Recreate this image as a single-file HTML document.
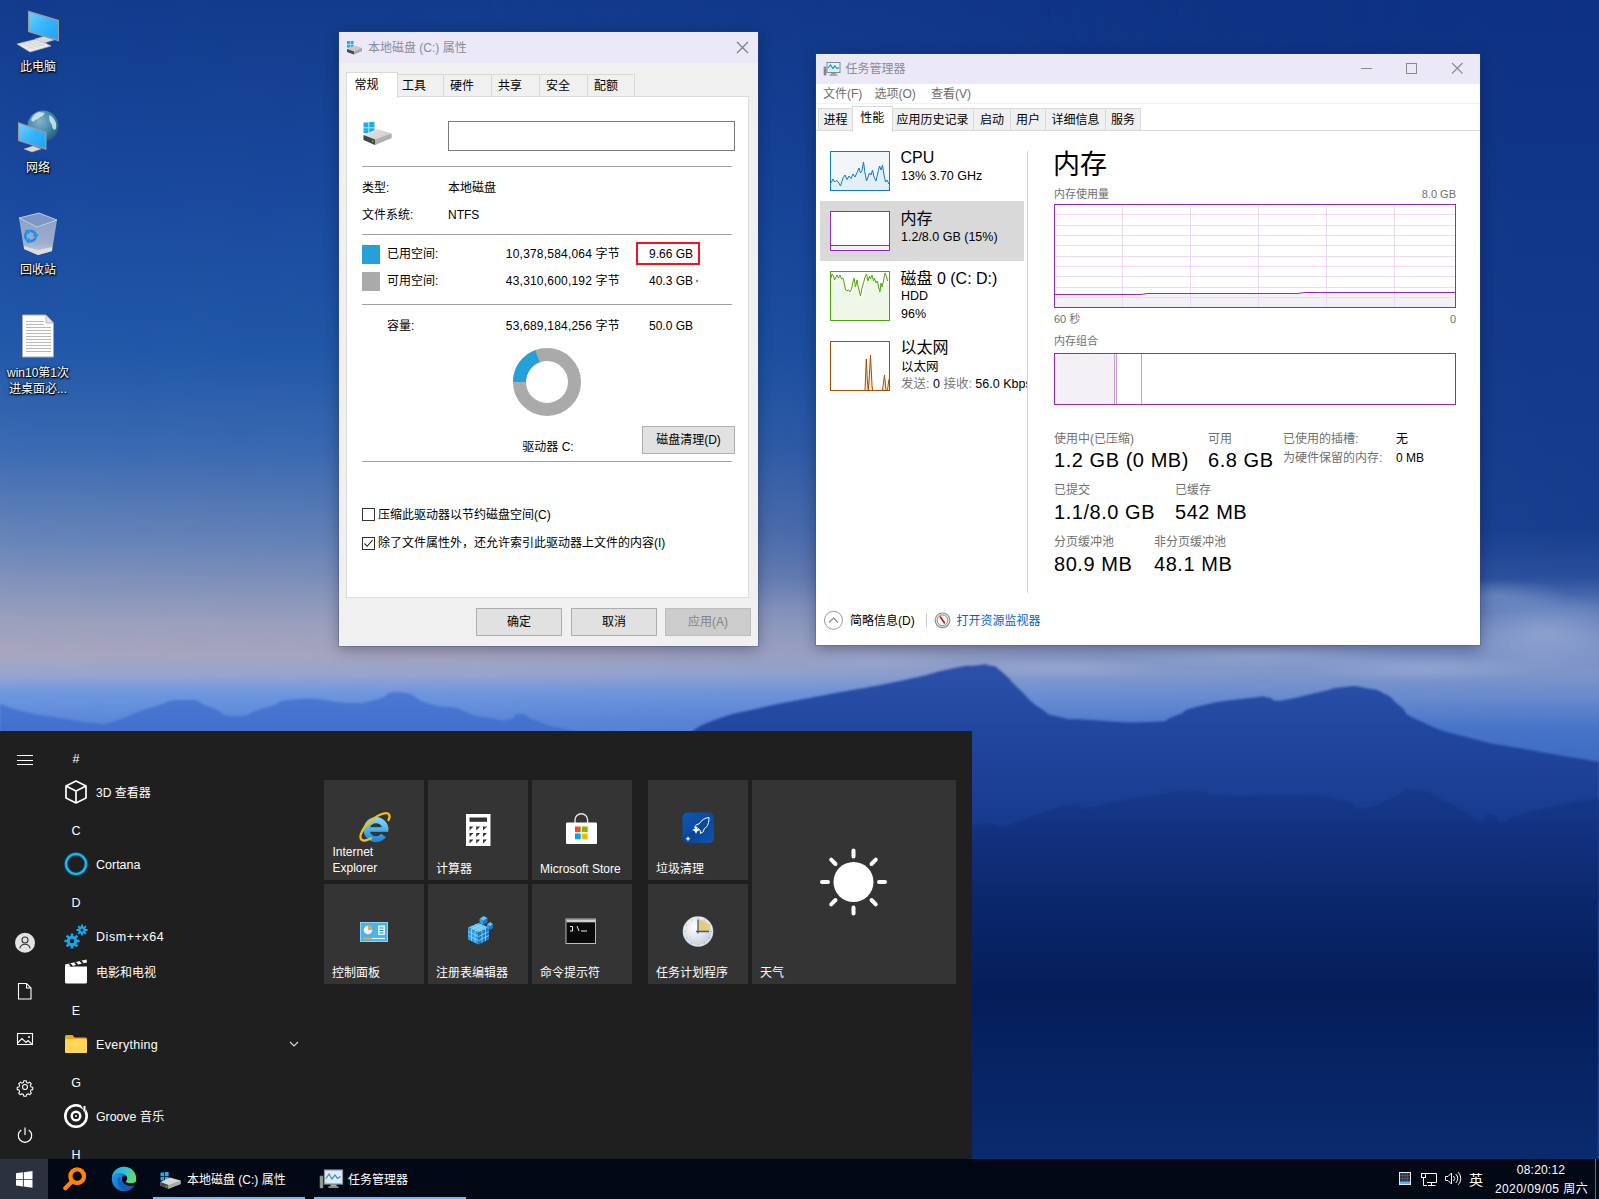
<!DOCTYPE html>
<html lang="zh-CN">
<head>
<meta charset="utf-8">
<title>Windows 10 桌面</title>
<style>
*{box-sizing:border-box;margin:0;padding:0}
html,body{width:1599px;height:1199px;overflow:hidden;background:#0c2f7c}
body{position:relative;font-family:"Liberation Sans","Noto Sans CJK SC",sans-serif;font-size:12px;color:#000;line-height:1}
.abs{position:absolute}
.t{position:absolute;white-space:nowrap;line-height:16px;height:16px}
#wall{position:absolute;left:0;top:0;width:1599px;height:1199px}
/* desktop icons */
.dlabel{position:absolute;width:90px;text-align:center;color:#fff;font-size:12px;line-height:17px;text-shadow:0 1px 2px #000,0 0 3px rgba(0,0,0,.9),1px 1px 1px rgba(0,0,0,.8)}
/* windows */
.win{position:absolute;background:#f0f0f0;box-shadow:0 0 0 1px rgba(60,70,110,.55),0 6px 22px rgba(0,0,20,.5)}
.tbar{position:absolute;left:0;top:0;right:0;background:#ebe9f8}
.hr{position:absolute;height:1px;background:#a0a0a0}
.btn{position:absolute;background:#e1e1e1;border:1px solid #adadad;text-align:center;font-size:12px}
/* start */
#start{position:absolute;left:0;top:731px;width:972px;height:428px;background:#1f1f1f;color:#fff}
.tile{position:absolute;background:#333;width:100px;height:100px}
.tile .lb{position:absolute;left:8px;bottom:5px;font-size:12px;line-height:16px;color:#fff;white-space:nowrap}
.al{position:absolute;left:96px;font-size:13px;line-height:18px;color:#fff;white-space:nowrap}
.ah{position:absolute;left:70px;font-size:13px;line-height:18px;color:#fff;width:12px;text-align:center}
#taskbar{position:absolute;left:0;top:1159px;width:1599px;height:40px;background:#040a1a;color:#fff}
</style>
</head>
<body>
<svg id="wall" width="1599" height="1199" viewBox="0 0 1599 1199">
<defs>
<linearGradient id="skyL" x1="0" y1="0" x2="0" y2="760" gradientUnits="userSpaceOnUse">
<stop offset="0" stop-color="#133c8d"/>
<stop offset="0.26" stop-color="#1a4a9f"/>
<stop offset="0.46" stop-color="#2259a9"/>
<stop offset="0.59" stop-color="#3b6bb3"/>
<stop offset="0.72" stop-color="#6c87ba"/>
<stop offset="0.815" stop-color="#9aa0bd"/>
<stop offset="0.862" stop-color="#a9a6bf"/>
<stop offset="0.888" stop-color="#97a6d0"/>
<stop offset="0.912" stop-color="#6f97e0"/>
<stop offset="0.95" stop-color="#5b88da"/>
<stop offset="1" stop-color="#5583d6"/>
</linearGradient>
<linearGradient id="skyR" x1="0" y1="0" x2="0" y2="760" gradientUnits="userSpaceOnUse">
<stop offset="0" stop-color="#0e3283"/>
<stop offset="0.26" stop-color="#103687"/>
<stop offset="0.53" stop-color="#133a8b"/>
<stop offset="0.70" stop-color="#173e8e"/>
<stop offset="0.76" stop-color="#2a4f9c"/>
<stop offset="0.80" stop-color="#5a78b8"/>
<stop offset="0.84" stop-color="#768ec3"/>
<stop offset="0.885" stop-color="#7f95c9"/>
<stop offset="0.92" stop-color="#6688cd"/>
<stop offset="0.96" stop-color="#4673c8"/>
<stop offset="1" stop-color="#3f6cc4"/>
</linearGradient>
<linearGradient id="hm" x1="0" y1="0" x2="1599" y2="0" gradientUnits="userSpaceOnUse">
<stop offset="0" stop-color="#000"/>
<stop offset="0.3" stop-color="#141414"/>
<stop offset="0.5" stop-color="#5a5a5a"/>
<stop offset="0.65" stop-color="#b3b3b3"/>
<stop offset="0.8" stop-color="#ebebeb"/>
<stop offset="1" stop-color="#fff"/>
</linearGradient>
<mask id="mk" maskUnits="userSpaceOnUse" x="0" y="0" width="1599" height="1199"><rect width="1599" height="1199" fill="url(#hm)"/></mask>
<linearGradient id="m1" x1="0" y1="690" x2="0" y2="740" gradientUnits="userSpaceOnUse">
<stop offset="0" stop-color="#4b79d3"/><stop offset="1" stop-color="#416ecc"/>
</linearGradient>
<linearGradient id="m2" x1="0" y1="660" x2="0" y2="830" gradientUnits="userSpaceOnUse">
<stop offset="0" stop-color="#2c52ab"/><stop offset="0.4" stop-color="#22479f"/><stop offset="1" stop-color="#173a8e"/>
</linearGradient>
<linearGradient id="m3" x1="0" y1="790" x2="0" y2="1160" gradientUnits="userSpaceOnUse">
<stop offset="0" stop-color="#17398a"/><stop offset="0.12" stop-color="#123180"/><stop offset="0.3" stop-color="#0b276c"/><stop offset="0.55" stop-color="#051e5a"/><stop offset="1" stop-color="#0a2b6f"/>
</linearGradient>
<radialGradient id="cl" cx="0.5" cy="0.5" r="0.5"><stop offset="0" stop-color="#a9b9dc" stop-opacity=".8"/><stop offset="1" stop-color="#a9b9dc" stop-opacity="0"/></radialGradient>
<filter id="bl" color-interpolation-filters="sRGB"><feGaussianBlur stdDeviation="1.2"/></filter>
</defs>
<rect width="1599" height="1199" fill="url(#skyL)"/>
<rect width="1599" height="1199" fill="url(#skyR)" mask="url(#mk)"/>
<ellipse cx="1260" cy="656" rx="150" ry="13" fill="url(#cl)" opacity=".55"/>
<ellipse cx="1060" cy="668" rx="110" ry="11" fill="url(#cl)" opacity=".5"/>
<ellipse cx="1420" cy="668" rx="120" ry="14" fill="url(#cl)" opacity=".5"/>
<ellipse cx="1545" cy="632" rx="85" ry="40" fill="url(#cl)" opacity=".6"/>
<ellipse cx="1500" cy="596" rx="70" ry="16" fill="url(#cl)" opacity=".4"/>
<ellipse cx="880" cy="660" rx="90" ry="12" fill="url(#cl)" opacity=".35"/>
<path filter="url(#bl)" fill="url(#m1)" d="M0 704C8.3 706.7 5.0 707.3 25 712C45.0 716.7 36.7 714.3 60 718C83.3 721.7 77.7 721.7 95 723C112.3 724.3 93.7 727.0 112 722C130.3 717.0 125.7 715.3 150 708C174.3 700.7 165.0 700.3 185 700C205.0 699.7 193.3 701.7 210 707C226.7 712.3 216.7 715.7 235 716C253.3 716.3 243.3 713.7 265 708C286.7 702.3 271.7 700.7 300 699C328.3 697.3 325.0 702.7 350 703C375.0 703.3 358.3 703.5 375 700C391.7 696.5 381.7 691.2 400 692.5C418.3 693.8 411.7 698.8 430 704C448.3 709.2 443.3 705.3 455 708C466.7 710.7 457.7 709.3 465 712C472.3 714.7 468.7 714.0 477 716C485.3 718.0 479.7 716.7 490 718C500.3 719.3 498.0 721.3 508 720C518.0 718.7 511.0 714.0 520 714C529.0 714.0 521.7 715.3 535 720C548.3 724.7 538.3 724.0 560 728C581.7 732.0 553.3 729.7 600 732C646.7 734.3 633.3 732.3 700 735C766.7 737.7 766.7 738.3 800 740L800 760L0 760Z"/>
<path filter="url(#bl)" fill="url(#m2)" d="M690 733C698.3 728.7 691.7 728.3 715 720C738.3 711.7 725.0 716.0 760 708C795.0 700.0 773.3 705.0 820 696C866.7 687.0 856.7 690.0 900 681C943.3 672.0 925.0 674.2 950 669C975.0 663.8 961.7 666.7 975 665.5C988.3 664.3 981.0 663.3 990 665.5C999.0 667.7 992.0 663.8 1002 672C1012.0 680.2 1007.3 678.0 1020 690C1032.7 702.0 1026.7 699.0 1040 708C1053.3 717.0 1043.3 713.0 1060 717C1076.7 721.0 1060.0 718.3 1090 720C1120.0 721.7 1121.7 723.3 1150 722C1178.3 720.7 1158.3 721.3 1175 716C1191.7 710.7 1175.0 712.0 1200 706C1225.0 700.0 1227.3 700.8 1250 698C1272.7 695.2 1259.7 696.7 1268 697.5C1276.3 698.3 1267.7 700.0 1275 700.5C1282.3 701.0 1275.0 701.8 1290 699C1305.0 696.2 1301.7 696.0 1320 692C1338.3 688.0 1330.0 688.3 1345 687C1360.0 685.7 1351.7 685.7 1365 688C1378.3 690.3 1373.3 688.0 1385 694C1396.7 700.0 1388.3 697.0 1400 706C1411.7 715.0 1396.7 710.3 1420 721C1443.3 731.7 1433.3 728.3 1470 738C1506.7 747.7 1487.0 742.0 1530 750C1573.0 758.0 1576.0 758.0 1599 762L1599 900L690 900Z"/>
<path filter="url(#bl)" fill="url(#m3)" d="M960 835C965.0 832.0 965.0 829.7 975 826C985.0 822.3 981.7 824.0 990 824C998.3 824.0 991.7 826.3 1000 826C1008.3 825.7 1001.7 827.0 1015 823C1028.3 819.0 1021.0 820.0 1040 814C1059.0 808.0 1057.0 806.8 1072 805C1087.0 803.2 1072.3 809.2 1085 808.5C1097.7 807.8 1088.3 807.2 1110 803C1131.7 798.8 1123.3 800.0 1150 796C1176.7 792.0 1163.3 791.0 1190 791C1216.7 791.0 1195.0 794.7 1230 796C1265.0 797.3 1258.3 793.7 1295 795C1331.7 796.3 1317.7 795.7 1340 800C1362.3 804.3 1345.3 808.3 1362 808C1378.7 807.7 1372.3 805.0 1390 799C1407.7 793.0 1395.0 788.3 1415 790C1435.0 791.7 1429.0 794.0 1450 804C1471.0 814.0 1465.7 816.3 1478 820C1490.3 823.7 1481.3 816.0 1487 815C1492.7 814.0 1489.7 814.7 1495 817C1500.3 819.3 1494.7 822.7 1503 822C1511.3 821.3 1501.0 820.7 1520 815C1539.0 809.3 1533.7 810.7 1560 805C1586.3 799.3 1586.0 800.3 1599 798L1599 1199L960 1199Z"/>
</svg>

<svg class="abs" style="left:0;top:0" width="100" height="400" viewBox="0 0 100 400">
<defs>
<linearGradient id="scr" x1="0" y1="0" x2="1" y2="1"><stop offset="0" stop-color="#6fd0ff"/><stop offset=".5" stop-color="#35b4ff"/><stop offset="1" stop-color="#1ea3f5"/></linearGradient>
<radialGradient id="glb" cx=".4" cy=".35" r=".7"><stop offset="0" stop-color="#7fb6cf"/><stop offset=".6" stop-color="#3f86a6"/><stop offset="1" stop-color="#1f5c7c"/></radialGradient>
<linearGradient id="bin" x1="0" y1="0" x2="0" y2="1"><stop offset="0" stop-color="#8fa6cc"/><stop offset=".7" stop-color="#a9b6cf"/><stop offset="1" stop-color="#d5d7dc"/></linearGradient>
</defs>
<!-- this pc -->
<polygon points="17,44 37,39 51,46 30,52" fill="#ededed" stroke="#bdbdbd" stroke-width=".6"/><path d="M20.500 44.800L40 40M24 46.500L43.500 41.800M27 48.500L47 43.500M22 42.800L35 49.500M27 41.500L40 48.300M32 40.300L45 47" stroke="#c9c9c9" stroke-width=".6" fill="none"/>
<polygon points="35,39 45,36 54,40 44,43" fill="#d8d8d8" stroke="#b5b5b5" stroke-width=".5"/>
<polygon points="28,10.5 59,20 59,41.5 28,32" fill="#9a9a9a"/>
<polygon points="29.2,12.3 57.6,21 57.6,39.6 29.2,31" fill="url(#scr)"/>
<!-- network -->
<circle cx="43" cy="126" r="15.5" fill="url(#glb)"/>
<path d="M31 120q2-6 8-8q4 0 5 2q-1 3-4 3q-2 3-5 3q-1 3-4 0zM49 115q5 2 7 8q1 5-1 7q-3-1-3-5q-3-3-3-10zM40 113q3-1 5 0l-2 2z" fill="#d7e9f1" opacity=".85"/>
<polygon points="24,149 33,146 41,149 32,152" fill="#d8d8d8" stroke="#b5b5b5" stroke-width=".5"/>
<polygon points="18,122 46.5,132 46.5,150 18,141" fill="#9a9a9a"/>
<polygon points="19.2,123.8 45.2,133 45.2,148.2 19.2,140" fill="url(#scr)"/>
<!-- recycle bin -->
<polygon points="19,218 39,213 57,220 52,251 38,255 24,249" fill="url(#bin)" opacity=".92"/>
<polygon points="19,218 39,213 57,220 37,227" fill="#7e97c4" stroke="#cfd8e8" stroke-width=".8"/>
<polygon points="24,246 38,250 52,247 52,251 38,255 24,249" fill="#dedede"/>
<path d="M29.6 230.9A5.2 5.2 0 0 1 35.5 234.7M35.4 237.8A5.2 5.2 0 0 1 29.2 241.0M26.5 239.3A5.2 5.2 0 0 1 26.8 232.3" stroke="#1e8fe6" stroke-width="2.800" fill="none"/><path d="M38.6 233.8L32.4 235.5L36.5 238.1ZM28.3 244.1L30.0 237.9L25.7 240.1ZM24.6 230.1L29.1 234.6L29.4 229.8Z" fill="#1e8fe6"/>
<!-- text file -->
<polygon points="22.5,315 46,315 53.5,323 53.5,357 22.5,357" fill="#fcfcfc" stroke="#a8a8a8" stroke-width="1"/>
<polygon points="46,315 46,323 53.5,323" fill="#e4e4e4" stroke="#a8a8a8" stroke-width=".8"/>
<g stroke="#b9b9b9" stroke-width="1"><path d="M26 321.5h18M26 324.5h18M26 327.5h25M26 330.5h25M26 333.5h25M26 336.5h25M26 339.5h25M26 342.5h25M26 345.5h25M26 348.5h25M26 351.5h25"/></g>
</svg>
<div class="t" style="top:58.75px;font-size:12px;line-height:17px;height:17px;left:-162px;width:400px;text-align:center;color:#fff;text-shadow:0 1px 2px #000,0 0 3px rgba(0,0,0,.9),1px 1px 1px rgba(0,0,0,.8);">此电脑</div>
<div class="t" style="top:159.75px;font-size:12px;line-height:17px;height:17px;left:-162px;width:400px;text-align:center;color:#fff;text-shadow:0 1px 2px #000,0 0 3px rgba(0,0,0,.9),1px 1px 1px rgba(0,0,0,.8);">网络</div>
<div class="t" style="top:261.75px;font-size:12px;line-height:17px;height:17px;left:-162px;width:400px;text-align:center;color:#fff;text-shadow:0 1px 2px #000,0 0 3px rgba(0,0,0,.9),1px 1px 1px rgba(0,0,0,.8);">回收站</div>
<div class="t" style="top:364.75px;font-size:12px;line-height:17px;height:17px;left:-162px;width:400px;text-align:center;color:#fff;text-shadow:0 1px 2px #000,0 0 3px rgba(0,0,0,.9),1px 1px 1px rgba(0,0,0,.8);">win10第1次</div>
<div class="t" style="top:380.75px;font-size:12px;line-height:17px;height:17px;left:-162px;width:400px;text-align:center;color:#fff;text-shadow:0 1px 2px #000,0 0 3px rgba(0,0,0,.9),1px 1px 1px rgba(0,0,0,.8);">进桌面必...</div>

<div class="abs" style="left:339px;top:32px;width:419px;height:614px;background:#f0f0f0;box-shadow:0 0 0 1px rgba(60,75,125,.3),0 3px 14px rgba(0,0,30,.32);"></div>
<div class="abs" style="left:339px;top:32px;width:419px;height:31px;background:#ebe9f8;"></div>
<svg class="abs" style="left:346px;top:40px" width="18" height="16" viewBox="0 0 18 16"><rect x="1" y="1" width="3" height="3" fill="#19b0f0"/><rect x="4.6" y="1" width="3" height="3" fill="#19b0f0"/><rect x="1" y="4.6" width="3" height="3" fill="#19b0f0"/><rect x="4.6" y="4.6" width="3" height="3" fill="#19b0f0"/><polygon points="1,9 9,5.5 16,8 16,11 8,14.5 1,12" fill="#c9c9c9"/><polygon points="1,9 8,11.5 8,14.5 1,12" fill="#4a4a4a"/><polygon points="8,11.5 16,8 16,11 8,14.5" fill="#a9a9a9"/></svg>
<div class="t" style="top:39.75px;font-size:12px;line-height:17px;height:17px;left:368px;color:#8b8b99;">本地磁盘 (C:) 属性</div>
<svg class="abs" style="left:736px;top:41px" width="13" height="13" viewBox="0 0 13 13"><path d="M1 1L12 12M12 1L1 12" stroke="#7a7a7a" stroke-width="1.1" fill="none"/></svg>
<div class="abs" style="left:346px;top:96px;width:403px;height:502px;background:#fff;border:1px solid #dcdcdc;"></div>
<div class="abs" style="left:397px;top:74px;width:47px;height:23px;background:#f0f0f0;border:1px solid #d9d9d9;border-bottom:1px solid #dcdcdc;"></div>
<div class="t" style="top:77.75px;font-size:12px;line-height:17px;height:17px;left:214px;width:400px;text-align:center;">工具</div>
<div class="abs" style="left:443px;top:74px;width:49px;height:23px;background:#f0f0f0;border:1px solid #d9d9d9;border-bottom:1px solid #dcdcdc;"></div>
<div class="t" style="top:77.75px;font-size:12px;line-height:17px;height:17px;left:262px;width:400px;text-align:center;">硬件</div>
<div class="abs" style="left:491px;top:74px;width:49px;height:23px;background:#f0f0f0;border:1px solid #d9d9d9;border-bottom:1px solid #dcdcdc;"></div>
<div class="t" style="top:77.75px;font-size:12px;line-height:17px;height:17px;left:310px;width:400px;text-align:center;">共享</div>
<div class="abs" style="left:539px;top:74px;width:49px;height:23px;background:#f0f0f0;border:1px solid #d9d9d9;border-bottom:1px solid #dcdcdc;"></div>
<div class="t" style="top:77.75px;font-size:12px;line-height:17px;height:17px;left:358px;width:400px;text-align:center;">安全</div>
<div class="abs" style="left:587px;top:74px;width:48px;height:23px;background:#f0f0f0;border:1px solid #d9d9d9;border-bottom:1px solid #dcdcdc;"></div>
<div class="t" style="top:77.75px;font-size:12px;line-height:17px;height:17px;left:406px;width:400px;text-align:center;">配额</div>
<div class="abs" style="left:346px;top:72px;width:52px;height:26px;background:#fff;border:1px solid #d9d9d9;border-bottom:none;"></div>
<div class="t" style="top:76.75px;font-size:12px;line-height:17px;height:17px;left:166.5px;width:400px;text-align:center;">常规</div>
<svg class="abs" style="left:362px;top:121px" width="32" height="26" viewBox="0 0 32 26"><defs><linearGradient id="dtop" x1="0" y1="0" x2="1" y2="1"><stop offset="0" stop-color="#e6e6e6"/><stop offset="1" stop-color="#c4c4c4"/></linearGradient></defs><rect x="1.5" y="1.5" width="5" height="5" fill="#19b0f0"/><rect x="7.2" y="1" width="5.3" height="5.5" fill="#19b0f0"/><rect x="1.5" y="7.2" width="5" height="5" fill="#19b0f0"/><rect x="7.2" y="7.2" width="5.3" height="5.3" fill="#19b0f0"/><polygon points="1.5,14 15,8 29.5,12.5 29.5,17 13,24 1.5,19" fill="url(#dtop)"/><polygon points="1.5,14 13,18.5 13,24 1.5,19" fill="#454545"/><polygon points="13,18.5 29.5,12.5 29.5,17 13,24" fill="#b0b0b0"/><rect x="10" y="19.5" width="1.6" height="1.6" fill="#3bd23b"/></svg>
<div class="abs" style="left:448px;top:121px;width:287px;height:30px;background:#fff;border:1px solid #7a7a7a;"></div>
<div class="abs" style="left:362px;top:166px;width:370px;height:1px;background:#a0a0a0;"></div>
<div class="abs" style="left:362px;top:234px;width:370px;height:1px;background:#a0a0a0;"></div>
<div class="abs" style="left:362px;top:304px;width:370px;height:1px;background:#a0a0a0;"></div>
<div class="abs" style="left:362px;top:461px;width:370px;height:1px;background:#a0a0a0;"></div>
<div class="t" style="top:179.75px;font-size:12px;line-height:17px;height:17px;left:362px;">类型:</div>
<div class="t" style="top:179.75px;font-size:12px;line-height:17px;height:17px;left:448px;">本地磁盘</div>
<div class="t" style="top:206.75px;font-size:12px;line-height:17px;height:17px;left:362px;">文件系统:</div>
<div class="t" style="top:206.75px;font-size:12px;line-height:17px;height:17px;left:448px;">NTFS</div>
<div class="abs" style="left:362px;top:245px;width:18px;height:19px;background:#26a0da;"></div>
<div class="abs" style="left:362px;top:272px;width:18px;height:19px;background:#aaaaaa;"></div>
<div class="t" style="top:245.75px;font-size:12px;line-height:17px;height:17px;left:387px;">已用空间:</div>
<div class="t" style="top:272.75px;font-size:12px;line-height:17px;height:17px;left:387px;">可用空间:</div>
<div class="t" style="top:317.75px;font-size:12px;line-height:17px;height:17px;left:387px;">容量:</div>
<div class="t" style="top:245.75px;font-size:12px;line-height:17px;height:17px;right:979px;letter-spacing:.2px;">10,378,584,064 字节</div>
<div class="t" style="top:272.75px;font-size:12px;line-height:17px;height:17px;right:979px;letter-spacing:.2px;">43,310,600,192 字节</div>
<div class="t" style="top:317.75px;font-size:12px;line-height:17px;height:17px;right:979px;letter-spacing:.2px;">53,689,184,256 字节</div>
<div class="abs" style="left:636px;top:242px;width:64px;height:23px;border:2px solid #ee1520;"></div>
<div class="t" style="top:245.75px;font-size:12px;line-height:17px;height:17px;right:906px;">9.66 GB</div>
<div class="t" style="top:272.75px;font-size:12px;line-height:17px;height:17px;right:906px;">40.3 GB</div>
<div class="t" style="top:317.75px;font-size:12px;line-height:17px;height:17px;right:906px;">50.0 GB</div>
<div class="abs" style="left:696px;top:280px;width:2px;height:2px;background:#777;transform:rotate(45deg);"></div>
<svg class="abs" style="left:0;top:0" width="1599" height="500" viewBox="0 0 1599 500"><circle cx="547" cy="382" r="27.5" fill="none" stroke="#aaaaaa" stroke-width="13"/><path d="M513.00 382.00 A34 34 0 0 1 535.15 350.13 L539.68 362.32 A21 21 0 0 0 526.00 382.00Z" fill="#26a0da"/></svg>
<div class="t" style="top:438.75px;font-size:12px;line-height:17px;height:17px;left:348px;width:400px;text-align:center;">驱动器 C:</div>
<div class="abs" style="left:642px;top:426px;width:93px;height:28px;background:#e1e1e1;border:1px solid #adadad;"></div>
<div class="t" style="top:431.75px;font-size:12px;line-height:17px;height:17px;left:488.5px;width:400px;text-align:center;">磁盘清理(D)</div>
<div class="abs" style="left:362px;top:508px;width:13px;height:13px;background:#fff;border:1px solid #333;"></div>
<div class="abs" style="left:362px;top:537px;width:13px;height:13px;background:#fff;border:1px solid #333;"></div>
<svg class="abs" style="left:362px;top:537px" width="13" height="13" viewBox="0 0 13 13"><path d="M2.5 6.5L5.2 9.3L10.5 3.2" stroke="#222" stroke-width="1.1" fill="none"/></svg>
<div class="t" style="top:506.75px;font-size:12px;line-height:17px;height:17px;left:378px;">压缩此驱动器以节约磁盘空间(C)</div>
<div class="t" style="top:534.75px;font-size:12px;line-height:17px;height:17px;left:378px;">除了文件属性外，还允许索引此驱动器上文件的内容(I)</div>
<div class="abs" style="left:476px;top:608px;width:86px;height:28px;background:#e1e1e1;border:1px solid #adadad;"></div>
<div class="abs" style="left:571px;top:608px;width:86px;height:28px;background:#e1e1e1;border:1px solid #adadad;"></div>
<div class="abs" style="left:665px;top:608px;width:86px;height:28px;background:#cccccc;border:1px solid #bfbfbf;"></div>
<div class="t" style="top:613.75px;font-size:12px;line-height:17px;height:17px;left:319px;width:400px;text-align:center;">确定</div>
<div class="t" style="top:613.75px;font-size:12px;line-height:17px;height:17px;left:414px;width:400px;text-align:center;">取消</div>
<div class="t" style="top:613.75px;font-size:12px;line-height:17px;height:17px;left:508px;width:400px;text-align:center;color:#838383;">应用(A)</div>

<div class="abs" style="left:816px;top:54px;width:664px;height:591px;background:#fff;box-shadow:0 0 0 1px rgba(60,75,125,.3),0 3px 14px rgba(0,0,30,.32);"></div>
<div class="abs" style="left:816px;top:54px;width:664px;height:30px;background:#ebe9f8;"></div>
<svg class="abs" style="left:823px;top:61px" width="18" height="16" viewBox="0 0 18 16"><rect x="1" y="6" width="2" height="8" fill="#8a8f8a" stroke="#666" stroke-width=".5"/><rect x="1.3" y="6.5" width="1.4" height="2" fill="#4fd24f"/><rect x="4" y="1.5" width="13" height="10" fill="#dff3fb" stroke="#7d8a93" stroke-width="1"/><path d="M5 7l2.5-3 2.5 3.5 2-2.5 2 2.5 2-1" stroke="#1b86c8" stroke-width="1.1" fill="none"/><rect x="8" y="12" width="5" height="1.6" fill="#9aa3a8"/><rect x="6.5" y="13.5" width="8" height="1.2" fill="#8a9297"/></svg>
<div class="t" style="top:60.75px;font-size:12px;line-height:17px;height:17px;left:845.5px;color:#8b8b99;">任务管理器</div>
<svg class="abs" style="left:1355px;top:58px" width="115" height="22" viewBox="0 0 115 22"><path d="M6 10.5h11" stroke="#8a8a8a" stroke-width="1" fill="none"/><rect x="51.500" y="5.500" width="10" height="10" stroke="#8a8a8a" stroke-width="1" fill="none"/><path d="M97 5l10.500 10.500M107.500 5l-10.500 10.500" stroke="#8a8a8a" stroke-width="1.100" fill="none"/></svg>
<div class="t" style="top:85.75px;font-size:12px;line-height:17px;height:17px;left:823px;color:#6d6d6d;">文件(F)</div>
<div class="t" style="top:85.75px;font-size:12px;line-height:17px;height:17px;left:874.5px;color:#6d6d6d;">选项(O)</div>
<div class="t" style="top:85.75px;font-size:12px;line-height:17px;height:17px;left:931px;color:#6d6d6d;">查看(V)</div>
<div class="abs" style="left:816px;top:103px;width:664px;height:1px;background:#f0f0f0;"></div>
<div class="abs" style="left:816px;top:130px;width:664px;height:1px;background:#d9d9d9;"></div>
<div class="abs" style="left:818px;top:108px;width:35px;height:23px;background:#f0f0f0;border:1px solid #d9d9d9;"></div>
<div class="t" style="top:111.75px;font-size:12px;line-height:17px;height:17px;left:635.5px;width:400px;text-align:center;">进程</div>
<div class="abs" style="left:891px;top:108px;width:83px;height:23px;background:#f0f0f0;border:1px solid #d9d9d9;"></div>
<div class="t" style="top:111.75px;font-size:12px;line-height:17px;height:17px;left:732.5px;width:400px;text-align:center;">应用历史记录</div>
<div class="abs" style="left:973px;top:108px;width:38px;height:23px;background:#f0f0f0;border:1px solid #d9d9d9;"></div>
<div class="t" style="top:111.75px;font-size:12px;line-height:17px;height:17px;left:792px;width:400px;text-align:center;">启动</div>
<div class="abs" style="left:1010px;top:108px;width:36px;height:23px;background:#f0f0f0;border:1px solid #d9d9d9;"></div>
<div class="t" style="top:111.75px;font-size:12px;line-height:17px;height:17px;left:828px;width:400px;text-align:center;">用户</div>
<div class="abs" style="left:1045px;top:108px;width:61px;height:23px;background:#f0f0f0;border:1px solid #d9d9d9;"></div>
<div class="t" style="top:111.75px;font-size:12px;line-height:17px;height:17px;left:875.5px;width:400px;text-align:center;">详细信息</div>
<div class="abs" style="left:1105px;top:108px;width:36px;height:23px;background:#f0f0f0;border:1px solid #d9d9d9;"></div>
<div class="t" style="top:111.75px;font-size:12px;line-height:17px;height:17px;left:923px;width:400px;text-align:center;">服务</div>
<div class="abs" style="left:852px;top:106px;width:41px;height:26px;background:#fff;border:1px solid #d9d9d9;border-bottom:none;"></div>
<div class="t" style="top:109.75px;font-size:12px;line-height:17px;height:17px;left:672.3px;width:400px;text-align:center;">性能</div>
<div class="abs" style="left:820px;top:201px;width:204px;height:60px;background:#d9d9d9;"></div>
<div class="abs" style="left:1027px;top:151px;width:1px;height:442px;background:#d4d4d4;"></div>
<div class="abs" style="left:830px;top:151px;width:60px;height:40px;background:#f1f6fa;border:1px solid #117dbb;"></div>
<svg class="abs" style="left:830px;top:151px" width="60" height="40" viewBox="0 0 60 40"><path d="M1 39V32L3 28 4.500 31 6 29.500 8 30.500 10.500 35 13 27 15 24 17 28.500 19 25 21 27.500 23 23 25 26 27 21.500 29 17 30.500 22 32 19.500 33.500 11 35 22 36.500 30 38 26 39.500 22 41 24 42.500 19 44 26 46 30 48 21 49.500 15 51 19 52.500 14 54 24 55.500 31 57 29 59 33V39Z" fill="#e3eef6" stroke="none"/><path d="M1 32L3 28 4.500 31 6 29.500 8 30.500 10.500 35 13 27 15 24 17 28.500 19 25 21 27.500 23 23 25 26 27 21.500 29 17 30.500 22 32 19.500 33.500 11 35 22 36.500 30 38 26 39.500 22 41 24 42.500 19 44 26 46 30 48 21 49.500 15 51 19 52.500 14 54 24 55.500 31 57 29 59 33" fill="none" stroke="#117dbb" stroke-width="1"/></svg>
<div class="t" style="top:146.75px;font-size:16px;line-height:22px;height:22px;left:900.5px;">CPU</div>
<div class="t" style="top:167.25px;font-size:12.5px;line-height:18px;height:18px;left:901px;">13% 3.70 GHz</div>
<div class="abs" style="left:830px;top:211px;width:60px;height:40px;background:#fff;border:1px solid #9528b4;"></div>
<div class="abs" style="left:831px;top:245px;width:58px;height:5px;background:#f4f1f6;border-top:1px solid #9528b4;"></div>
<div class="t" style="top:207.75px;font-size:16px;line-height:22px;height:22px;left:900.5px;">内存</div>
<div class="t" style="top:228.25px;font-size:12.5px;line-height:18px;height:18px;left:901px;">1.2/8.0 GB (15%)</div>
<div class="abs" style="left:830px;top:271px;width:60px;height:50px;background:#eff7e9;border:1px solid #4da60c;"></div>
<svg class="abs" style="left:830px;top:271px" width="60" height="50" viewBox="0 0 60 50"><path d="M1 1h58v12l-1-5-1.500-3-1.500 8-1.500 6-1-4-1 9-1.500-5-1-6-1.500 2-1.500-5-1 3-1.500-6-1.500 4-1-3-1.500 5-1.500-7-1.500 3-1.500 6-1.500 5-1.500 8-1-4-1.500-6-1-6-1.500 7-1.500-9-1 4-1.500 7-1.500 3-1.500-2-1.500 1-1.500-1-1.500-8-1-4-1.500 1-1.500-4-1.500 3-1.500-3-1 2-1.500 3-1-4-1.500-2-1 4Z" fill="#fff"/><path d="M1 7l1-4 1.500 2 1 4 1.500-3 1-2 1.500 3 1.500-3 1.500 4 1.500-1 1 4 1.500 8 1.500 1 1.500-1 1.500 2 1.500-3 1.500-7 1-4 1.500 9 1.500-7 1 6 1.500 6 1 4 1.500-8 1.500-5 1.500-6 1.500-3 1.500 7 1.500-5 1 3 1.500-4 1.500 6 1-3 1.500 5 1.500-2 1 6 1.500 5 1-9 1 4 1.500-6 1.500-8 1.500 3 1 5" fill="none" stroke="#4da60c" stroke-width="1"/></svg>
<div class="t" style="top:267.75px;font-size:16px;line-height:22px;height:22px;left:900.5px;">磁盘 0 (C: D:)</div>
<div class="t" style="top:287.25px;font-size:12.5px;line-height:18px;height:18px;left:901px;">HDD</div>
<div class="t" style="top:305.25px;font-size:12.5px;line-height:18px;height:18px;left:901px;">96%</div>
<div class="abs" style="left:830px;top:341px;width:60px;height:50px;background:#fff;border:1px solid #a74f01;"></div>
<svg class="abs" style="left:830px;top:341px" width="60" height="50" viewBox="0 0 60 50"><path d="M35 49L36.300 18 37.500 42 38.300 49 39 40 40.500 14 42 44 42.500 49M52.500 49L54.500 34 56 49M57.500 49L59 38" fill="#f6e4d4" stroke="#a74f01" stroke-width="1" stroke-linejoin="miter"/></svg>
<div class="t" style="top:336.75px;font-size:16px;line-height:22px;height:22px;left:900.5px;">以太网</div>
<div class="t" style="top:358.25px;font-size:12.5px;line-height:18px;height:18px;left:901px;">以太网</div>
<div class="abs" style="left:901px;top:0;width:126px;height:600px;overflow:hidden"><div class="t" style="top:375.25px;font-size:12.5px;line-height:18px;height:18px;left:0px;"><span style="color:#777">发送:</span> 0 <span style="color:#777">接收:</span> 56.0 Kbps</div>
</div>
<div class="t" style="top:147.25px;font-size:27px;line-height:36px;height:36px;left:1053px;">内存</div>
<div class="t" style="top:186.75px;font-size:11px;line-height:15px;height:15px;left:1054px;color:#707070;">内存使用量</div>
<div class="t" style="top:186.75px;font-size:11px;line-height:15px;height:15px;right:143px;color:#707070;">8.0 GB</div>
<svg class="abs" style="left:1054px;top:204px" width="402" height="104" viewBox="0 0 402 104"><rect x="0.5" y="0.5" width="401" height="103" fill="#fff"/><path d="M1 90.500H87L93 89.500H243L251 88.500H401V103H1Z" fill="#f4f1f6"/><path d="M1 10.5H401M1 21.5H401M1 31.5H401M1 41.5H401M1 52.5H401M1 62.5H401M1 72.5H401M1 83.5H401M1 93.5H401M68.5 1V103M136.5 1V103M204.5 1V103M272.5 1V103M340.5 1V103" stroke="#ecd9f3" stroke-width="1" fill="none"/><path d="M1 90.500H87L93 89.500H243L251 88.500H401" stroke="#9528b4" stroke-width="1" fill="none"/><rect x="0.5" y="0.5" width="401" height="103" fill="none" stroke="#9528b4" stroke-width="1"/></svg>
<div class="t" style="top:311.75px;font-size:11px;line-height:15px;height:15px;left:1054px;color:#707070;">60 秒</div>
<div class="t" style="top:311.75px;font-size:11px;line-height:15px;height:15px;right:143px;color:#707070;">0</div>
<div class="t" style="top:333.75px;font-size:11px;line-height:15px;height:15px;left:1054px;color:#707070;">内存组合</div>
<div class="abs" style="left:1054px;top:353px;width:402px;height:52px;background:#fff;border:1px solid #9528b4;"></div>
<div class="abs" style="left:1055px;top:354px;width:59px;height:50px;background:#f4f1f6;"></div>
<div class="abs" style="left:1114px;top:354px;width:1px;height:50px;background:#c79bd6;"></div>
<div class="abs" style="left:1116px;top:354px;width:1px;height:50px;background:#c79bd6;"></div>
<div class="abs" style="left:1141px;top:354px;width:1px;height:50px;background:#c79bd6;"></div>
<div class="t" style="top:430.75px;font-size:12px;line-height:17px;height:17px;left:1054px;color:#707070;">使用中(已压缩)</div>
<div class="t" style="top:430.75px;font-size:12px;line-height:17px;height:17px;left:1208px;color:#707070;">可用</div>
<div class="t" style="top:430.75px;font-size:12px;line-height:17px;height:17px;left:1283px;color:#707070;">已使用的插槽:</div>
<div class="t" style="top:430.75px;font-size:12px;line-height:17px;height:17px;left:1396px;">无</div>
<div class="t" style="top:449.75px;font-size:12px;line-height:17px;height:17px;left:1283px;color:#707070;">为硬件保留的内存:</div>
<div class="t" style="top:449.75px;font-size:12px;line-height:17px;height:17px;left:1396px;">0 MB</div>
<div class="t" style="top:447.25px;font-size:20px;line-height:26px;height:26px;left:1054px;letter-spacing:.55px;">1.2 GB (0 MB)</div>
<div class="t" style="top:447.25px;font-size:20px;line-height:26px;height:26px;left:1208px;letter-spacing:.55px;">6.8 GB</div>
<div class="t" style="top:481.75px;font-size:12px;line-height:17px;height:17px;left:1054px;color:#707070;">已提交</div>
<div class="t" style="top:481.75px;font-size:12px;line-height:17px;height:17px;left:1175px;color:#707070;">已缓存</div>
<div class="t" style="top:499.25px;font-size:20px;line-height:26px;height:26px;left:1054px;letter-spacing:.55px;">1.1/8.0 GB</div>
<div class="t" style="top:499.25px;font-size:20px;line-height:26px;height:26px;left:1175px;letter-spacing:.55px;">542 MB</div>
<div class="t" style="top:533.75px;font-size:12px;line-height:17px;height:17px;left:1054px;color:#707070;">分页缓冲池</div>
<div class="t" style="top:533.75px;font-size:12px;line-height:17px;height:17px;left:1154px;color:#707070;">非分页缓冲池</div>
<div class="t" style="top:551.25px;font-size:20px;line-height:26px;height:26px;left:1054px;letter-spacing:.55px;">80.9 MB</div>
<div class="t" style="top:551.25px;font-size:20px;line-height:26px;height:26px;left:1154px;letter-spacing:.55px;">48.1 MB</div>
<svg class="abs" style="left:823px;top:610px" width="22" height="22" viewBox="0 0 22 22"><circle cx="10.500" cy="10.300" r="9" fill="#fff" stroke="#9a9a9a" stroke-width="1"/><path d="M6 12.500L10.500 8l4.500 4.500" stroke="#8a8a8a" stroke-width="1.200" fill="none"/></svg>
<div class="t" style="top:612.75px;font-size:12px;line-height:17px;height:17px;left:850px;">简略信息(D)</div>
<div class="abs" style="left:926px;top:613px;width:1px;height:14px;background:#c8c8c8;"></div>
<svg class="abs" style="left:934px;top:612px" width="17" height="17" viewBox="0 0 17 17"><circle cx="8.500" cy="8.300" r="7.300" fill="#e9e9e9" stroke="#8f8f8f" stroke-width="1.200"/><circle cx="8.500" cy="8.300" r="5.300" fill="#fff" stroke="#c05a2a" stroke-width=".8"/><path d="M6 4.500L10.800 11.500" stroke="#d01818" stroke-width="1.800"/></svg>
<div class="t" style="top:612.75px;font-size:12px;line-height:17px;height:17px;left:956.5px;color:#0066cc;">打开资源监视器</div>

<div class="abs" style="left:0px;top:731px;width:972px;height:428px;background:#1f1f1f;"></div>
<div class="abs" style="left:17px;top:755px;width:16px;height:1px;background:#fff;"></div>
<div class="abs" style="left:17px;top:760px;width:16px;height:1px;background:#fff;"></div>
<div class="abs" style="left:17px;top:764px;width:16px;height:1px;background:#fff;"></div>
<div class="t" style="top:750.25px;font-size:12.5px;line-height:18px;height:18px;left:-124px;width:400px;text-align:center;color:#fff;">#</div>
<div class="t" style="top:822.25px;font-size:12.5px;line-height:18px;height:18px;left:-124px;width:400px;text-align:center;color:#fff;">C</div>
<div class="t" style="top:894.25px;font-size:12.5px;line-height:18px;height:18px;left:-124px;width:400px;text-align:center;color:#fff;">D</div>
<div class="t" style="top:1002.25px;font-size:12.5px;line-height:18px;height:18px;left:-124px;width:400px;text-align:center;color:#fff;">E</div>
<div class="t" style="top:1074.25px;font-size:12.5px;line-height:18px;height:18px;left:-124px;width:400px;text-align:center;color:#fff;">G</div>
<div class="t" style="top:1146.25px;font-size:12.5px;line-height:18px;height:18px;left:-124px;width:400px;text-align:center;color:#fff;">H</div>
<div class="t" style="top:784.75px;font-size:12px;line-height:17px;height:17px;left:96px;color:#fff;">3D 查看器</div>
<div class="t" style="top:856.25px;font-size:12.5px;line-height:18px;height:18px;left:96px;color:#fff;">Cortana</div>
<div class="t" style="top:928.25px;font-size:12.5px;line-height:18px;height:18px;left:96px;color:#fff;letter-spacing:.55px;">Dism++x64</div>
<div class="t" style="top:964.75px;font-size:12px;line-height:17px;height:17px;left:96px;color:#fff;">电影和电视</div>
<div class="t" style="top:1036.25px;font-size:12.5px;line-height:18px;height:18px;left:96px;color:#fff;letter-spacing:.3px;">Everything</div>
<div class="t" style="top:1108.75px;font-size:12.3px;line-height:17px;height:17px;left:96px;color:#fff;">Groove 音乐</div>
<svg class="abs" style="left:60px;top:776px" width="32" height="360" viewBox="60 776 32 360" fill="none">
<g stroke="#fff" stroke-width="1.700" stroke-linejoin="round"><path d="M76 781L86 786V798L76 803L66 798V786Z"/><path d="M66 786L76 791L86 786M76 791V803"/></g>
<circle cx="76" cy="864" r="10" stroke="#0a6f9a" stroke-width="4" opacity=".55"/><circle cx="76" cy="864" r="10" stroke="#10bdf9" stroke-width="2.200"/>
<g fill="#1aa7ee"><circle cx="72" cy="941" r="5.200"/><circle cx="82" cy="930" r="3.700"/>
<g stroke="#1aa7ee" stroke-width="2.600"><path d="M72 933.500v15M64.500 941h15M66.700 935.700l10.600 10.600M77.300 935.700l-10.600 10.600"/></g>
<g stroke="#1aa7ee" stroke-width="1.900"><path d="M82 924.500v11M76.500 930h11M78.100 926.100l7.800 7.800M85.900 926.100l-7.800 7.800"/></g></g>
<circle cx="72" cy="941" r="2.300" fill="#1f1f1f"/><circle cx="82" cy="930" r="1.500" fill="#1f1f1f"/>
<g fill="#fff"><path d="M65 966.500h22v15.500a1.500 1.500 0 0 1-1.500 1.500h-19a1.500 1.500 0 0 1-1.500-1.500Z"/><path d="M65 964.500L86.500 959.500L87 962.500L65.500 967.500Z"/></g>
<g fill="#1f1f1f"><path d="M68.500 963.700l2.500 3l2-.5l-2.500-3ZM74 962.400l2.500 3l2-.5l-2.500-3ZM79.500 961.100l2.500 3l2-.5l-2.500-3Z"/></g>
<path d="M65 1036.500a1.500 1.500 0 0 1 1.500-1.500h6l2 2.500h11a1.500 1.500 0 0 1 1.500 1.500v12.500a1.500 1.500 0 0 1-1.500 1.500h-19a1.500 1.500 0 0 1-1.500-1.500Z" fill="#e9a91f"/>
<path d="M65 1040.500a1.500 1.500 0 0 1 1.500-1.500h19a1.500 1.500 0 0 1 1.500 1.500v11a1.500 1.500 0 0 1-1.500 1.500h-19a1.500 1.500 0 0 1-1.500-1.500Z" fill="#ffd55c"/>
<circle cx="76" cy="1116" r="10.700" stroke="#fff" stroke-width="2.600"/><circle cx="76" cy="1116" r="4.300" stroke="#fff" stroke-width="2.400"/><circle cx="76" cy="1116" r="1" fill="#fff"/>
<path d="M80.500 1104.500l7 1l-2.500 6.500Z" fill="#1f1f1f"/><path d="M84.500 1106l0 5.500" stroke="#fff" stroke-width="2"/>
</svg>
<svg class="abs" style="left:288px;top:1039px" width="12" height="10" viewBox="0 0 12 10"><path d="M2 3l4 4l4-4" stroke="#ddd" stroke-width="1.100" fill="none"/></svg>
<svg class="abs" style="left:12px;top:930px" width="28" height="216" viewBox="12 930 28 216" fill="none">
<circle cx="25" cy="942.700" r="10" fill="#e3e3e3"/><circle cx="25" cy="940" r="3" stroke="#333" stroke-width="1.100"/><path d="M19.800 948.500a5.300 5.300 0 0 1 10.400 0" stroke="#333" stroke-width="1.100"/>
<path d="M18.500 983.500h8l4.500 4.500v11h-12.500Z M26.500 983.500v4.500h4.500" stroke="#fff" stroke-width="1.100"/>
<rect x="17.500" y="1033.500" width="15" height="11" stroke="#fff" stroke-width="1.100"/><path d="M17.500 1043l4.500-4.500l4 4l2-2l4.500 4" stroke="#fff" stroke-width="1.100"/><circle cx="29" cy="1037" r="1" fill="#fff"/>
<g transform="translate(25 1087) scale(.82) translate(-25 -1087)"><circle cx="25" cy="1087" r="3" stroke="#fff" stroke-width="1.300"/>
<path d="M23.600 1079.300h2.800l.5 2.200l1.900 .8l1.900-1.200l2 2l-1.200 1.900l.8 1.900l2.200 .5v2.800l-2.200 .5l-.8 1.900l1.200 1.900l-2 2l-1.900-1.200l-1.900 .8l-.5 2.200h-2.800l-.5-2.200l-1.900-.8l-1.900 1.200l-2-2l1.200-1.900l-.8-1.900l-2.200-.5v-2.800l2.200-.5l.8-1.900l-1.200-1.900l2-2l1.900 1.200l1.900-.8Z" stroke="#fff" stroke-width="1.300" stroke-linejoin="round"/></g>
<path d="M25 1127.500v7.500" stroke="#fff" stroke-width="1.200"/><path d="M21.300 1130a6.700 6.700 0 1 0 7.400 0" stroke="#fff" stroke-width="1.200"/>
</svg>
<div class="abs" style="left:324px;top:780px;width:100px;height:100px;background:#343434;"></div>
<div class="abs" style="left:428px;top:780px;width:100px;height:100px;background:#343434;"></div>
<div class="abs" style="left:532px;top:780px;width:100px;height:100px;background:#343434;"></div>
<div class="abs" style="left:324px;top:884px;width:100px;height:100px;background:#343434;"></div>
<div class="abs" style="left:428px;top:884px;width:100px;height:100px;background:#343434;"></div>
<div class="abs" style="left:532px;top:884px;width:100px;height:100px;background:#343434;"></div>
<div class="abs" style="left:648px;top:780px;width:100px;height:100px;background:#343434;"></div>
<div class="abs" style="left:648px;top:884px;width:100px;height:100px;background:#343434;"></div>
<div class="abs" style="left:752px;top:780px;width:204px;height:204px;background:#343434;"></div>
<div class="t" style="top:843.75px;font-size:12px;line-height:17px;height:17px;left:332.5px;color:#fff;">Internet</div>
<div class="t" style="top:859.75px;font-size:12px;line-height:17px;height:17px;left:332.5px;color:#fff;">Explorer</div>
<div class="t" style="top:860.75px;font-size:12px;line-height:17px;height:17px;left:436px;color:#fff;">计算器</div>
<div class="t" style="top:860.75px;font-size:12px;line-height:17px;height:17px;left:540px;color:#fff;">Microsoft Store</div>
<div class="t" style="top:964.75px;font-size:12px;line-height:17px;height:17px;left:332px;color:#fff;">控制面板</div>
<div class="t" style="top:964.75px;font-size:12px;line-height:17px;height:17px;left:436px;color:#fff;">注册表编辑器</div>
<div class="t" style="top:964.75px;font-size:12px;line-height:17px;height:17px;left:540px;color:#fff;">命令提示符</div>
<div class="t" style="top:860.75px;font-size:12px;line-height:17px;height:17px;left:656px;color:#fff;">垃圾清理</div>
<div class="t" style="top:964.75px;font-size:12px;line-height:17px;height:17px;left:656px;color:#fff;">任务计划程序</div>
<div class="t" style="top:964.75px;font-size:12px;line-height:17px;height:17px;left:760px;color:#fff;">天气</div>
<svg class="abs" style="left:324px;top:780px" width="632" height="204" viewBox="324 780 632 204" fill="none">
<defs><linearGradient id="ieb" gradientUnits="userSpaceOnUse" x1="0" y1="816" x2="0" y2="842"><stop offset="0" stop-color="#8be2fb"/><stop offset="1" stop-color="#1685d8"/></linearGradient><linearGradient id="ieb2" gradientUnits="userSpaceOnUse" x1="0" y1="816" x2="0" y2="842"><stop offset="0" stop-color="#8be2fb"/><stop offset="1" stop-color="#1685d8"/></linearGradient>
<linearGradient id="rk" x1="0" y1="0" x2="1" y2="1"><stop offset="0" stop-color="#0b5ab8"/><stop offset=".5" stop-color="#0a4a9e"/><stop offset="1" stop-color="#1572cf"/></linearGradient>
<radialGradient id="clk" cx=".4" cy=".35" r=".8"><stop offset="0" stop-color="#ffffff"/><stop offset="1" stop-color="#b9c7d6"/></radialGradient></defs>
<!-- IE -->
<path d="M385.500 829.500A9.500 9.500 0 1 0 383.500 835.500" stroke="url(#ieb)" stroke-width="6" fill="none"/>
<path d="M367 829.500H388.300" stroke="url(#ieb2)" stroke-width="4.600" fill="none"/>
<path d="M388.500 820c2.500-5 .5-8-5-6.500c-7.500 2-17.500 10-21.500 18c-3 6-1.500 9.500 3 9c2-.2 4-1 6-2.200" stroke="#f3bd1a" stroke-width="2.300" stroke-linecap="round" fill="none"/>
<!-- calc -->
<rect x="466" y="814" width="24.500" height="32" fill="#fff"/><rect x="469.500" y="817.500" width="17.500" height="4.300" fill="#343434"/>
<g fill="#343434"><path d="M469.500 826.500h4l-4 4ZM476.200 826.500h4l-4 4ZM483 826.500h4l-4 4ZM469.500 833h4l-4 4ZM476.200 833h4l-4 4ZM483 833h4l-4 4ZM469.500 839.500h4l-4 4ZM476.200 839.500h4l-4 4ZM483 839.500h4l-4 4Z"/></g>
<!-- store -->
<path d="M575 823v-3a6.300 6.300 0 0 1 12.600 0v3" stroke="#e6e6e6" stroke-width="1.400"/>
<rect x="566" y="822.500" width="31" height="21.500" rx="1" fill="#fff"/>
<rect x="575" y="826.500" width="5.700" height="5.700" fill="#f25022"/><rect x="582" y="826.500" width="5.700" height="5.700" fill="#7fba00"/><rect x="575" y="833.500" width="5.700" height="5.700" fill="#00a4ef"/><rect x="582" y="833.500" width="5.700" height="5.700" fill="#ffb900"/>
<!-- control panel -->
<rect x="360.500" y="922.500" width="27" height="19" fill="#49b3ea" stroke="#8fd4f6" stroke-width="1"/>
<circle cx="368" cy="930" r="4.300" fill="#f3f3f3"/><path d="M368 930v-4.300a4.300 4.300 0 0 1 4.300 4.300Z" fill="#f0a33a"/>
<rect x="378" y="925.500" width="7" height="9.500" fill="#dff1fb"/><path d="M379.500 928h4M379.500 930.500h4M379.500 933h4" stroke="#3a8dc8" stroke-width="1"/>
<path d="M363 938.500h22" stroke="#dff1fb" stroke-width="1.200"/><path d="M363 938.500h9" stroke="#f0a33a" stroke-width="1.200"/>
<!-- regedit -->
<g stroke-linejoin="round"><path d="M468 927.500L478.500 923L489 927.500L478.500 932.500Z" fill="#63c3f3"/><path d="M468 927.500L478.500 932.500V944.500L468 939.500Z" fill="#2b9fe6"/><path d="M478.500 932.500L489 927.500V939.500L478.500 944.500Z" fill="#1a7cc8"/>
<path d="M468 931.500L478.500 936.500L489 931.500M468 935.500L478.500 940.500L489 935.500M471.500 929v12M475 930.700v12M482 930.700v12M485.500 929v12M471.500 926L482 931M475 924.500L485.500 929.500M485.500 926L475 931M482 924.500L471.500 929.500" stroke="#9fdcfa" stroke-width=".7" fill="none"/>
<path d="M479.500 919L483.500 916L487.500 918L483.500 921Z" fill="#63c3f3"/><path d="M479.500 919L483.500 921V925L479.500 923Z" fill="#2b9fe6"/><path d="M483.500 921L487.500 918V922L483.500 925Z" fill="#1a7cc8"/>
<path d="M487 924L490.500 922L493 924.500L489.500 926.500Z" fill="#63c3f3"/><path d="M487 924L489.500 926.500V930L487 927.500Z" fill="#2b9fe6"/><path d="M489.500 926.500L493 924.500V928L489.500 930Z" fill="#1a7cc8"/></g>
<!-- cmd -->
<rect x="566" y="919" width="29.500" height="24.500" fill="#0a0a0a" stroke="#b9b9b9" stroke-width="1"/><rect x="566.500" y="919.500" width="28.500" height="2.800" fill="#d0d0d0"/>
<path d="M570 926.500h2.500v4.500h-2.500M574.500 927.500v.1M574.500 930.500v.1M577 926l2 5M581 931h6" stroke="#eee" stroke-width="1"/>
<!-- rocket -->
<rect x="682.500" y="812.500" width="31" height="30.500" rx="5" fill="url(#rk)"/>
<path d="M683 836q15-6 30-16v18a5 5 0 0 1-5 5h-20a5 5 0 0 1-5-5Z" fill="#0a3f92" opacity=".55"/>
<path d="M709 817.500c-4 .3-7.500 2.500-10 6.500l-2.500 .5l-2 3l3 .2l2.800 2.800l.2 3l3-2l.5-2.500c4-2.500 5-6.500 5-11.500Z" stroke="#fff" stroke-width="1" fill="none"/>
<path d="M696 826l1.200 2.800l2.800 1.200l-2.800 1.200l-1.200 2.800l-1.200-2.800l-2.800-1.200l2.800-1.200Z M688 836l.8 1.900l1.900 .8l-1.900 .8l-.8 1.900l-.8-1.900l-1.900-.8l1.900-.8Z" fill="#fff"/>
<!-- clock -->
<circle cx="698" cy="931.500" r="15.300" fill="#c9ced5"/><circle cx="698" cy="931.500" r="14.200" fill="url(#clk)" stroke="#f4f6f8" stroke-width=".8"/>
<path d="M698 931.500v-12a12 12 0 0 1 12 12Z" fill="#e9c877"/>
<path d="M710.6 931.5L711.8 931.5M708.9 937.8L710.0 938.4M704.3 942.4L704.9 943.5M698.0 944.1L698.0 945.3M691.7 942.4L691.1 943.5M687.1 937.8L686.0 938.4M685.4 931.5L684.2 931.5M687.1 925.2L686.0 924.6M691.7 920.6L691.1 919.5M698.0 918.9L698.0 917.7M704.3 920.6L704.9 919.5M708.9 925.2L710.0 924.6" stroke="#8fa0b3" stroke-width=".8"/><path d="M698 919.500v14M696 931.500h13" stroke="#3a5a86" stroke-width="1.300"/>
<!-- sun -->
<circle cx="853.500" cy="882" r="20" fill="#fff"/>
<g stroke="#fff" stroke-width="4" stroke-linecap="round"><path d="M853.500 850.500v6M853.500 907.500v6M822 882h6M879 882h6M831.200 859.700l4.300 4.300M871.500 900l4.300 4.300M875.800 859.700l-4.300 4.300M835.500 900l-4.300 4.300"/></g>
</svg>

<div class="abs" style="left:0px;top:1159px;width:1599px;height:40px;background:#030815;"></div>
<div class="abs" style="left:0px;top:1159px;width:48px;height:40px;background:#2b313f;"></div>
<svg class="abs" style="left:16px;top:1171px" width="17" height="17" viewBox="0 0 17 17"><path d="M0 2.300L6.900 1.300V7.900H0ZM7.800 1.200L16.500 0V7.900H7.800ZM0 8.800H6.900V15.400L0 14.400ZM7.800 8.800H16.500V16.700L7.800 15.500Z" fill="#fff"/></svg>
<svg class="abs" style="left:60px;top:1164px" width="30" height="30" viewBox="60 1164 30 30" fill="none"><circle cx="77.200" cy="1176.200" r="6.800" stroke="#ff8500" stroke-width="4.300"/><path d="M72 1181.500L65.300 1188.300" stroke="#ff8500" stroke-width="4.300" stroke-linecap="round"/></svg>
<svg class="abs" style="left:110px;top:1165px" width="28" height="28" viewBox="110 1165 28 28"><defs><linearGradient id="eg1" gradientUnits="userSpaceOnUse" x1="114" y1="1172" x2="136" y2="1180"><stop offset="0" stop-color="#2aa9ea"/><stop offset=".45" stop-color="#35c4cf"/><stop offset="1" stop-color="#6fe24a"/></linearGradient><linearGradient id="eg2" gradientUnits="userSpaceOnUse" x1="112" y1="1176" x2="132" y2="1190"><stop offset="0" stop-color="#1f95e6"/><stop offset=".5" stop-color="#1873cf"/><stop offset="1" stop-color="#1456a8"/></linearGradient><clipPath id="ec"><circle cx="124" cy="1179" r="12.200"/></clipPath></defs>
<g clip-path="url(#ec)"><rect x="110" y="1165" width="28" height="28" fill="url(#eg2)"/>
<path d="M119 1176.500C116.500 1180 117.500 1185.500 121.500 1188.500C125 1191 130 1190.500 133 1188L136 1184L127 1186.500L121.500 1181Z" fill="#1559ae" opacity=".75"/>
<path d="M111 1179C111 1170 118 1166 124 1166C131 1166 137 1171 137 1178.500C137 1181.500 134.500 1183.300 131 1183.300C128 1183.300 126 1182.500 125.500 1181.500C127 1180 127.500 1178.500 127 1177C126 1174.500 122.500 1172.800 119 1173C115.500 1173.300 112.500 1175.500 111 1179Z" fill="url(#eg1)"/>
<path d="M127 1177C127.500 1178.500 127 1180 125.500 1181.500C126.500 1183 129 1183.600 131.500 1183.300C133.500 1183.100 135 1182.500 137 1181L137 1183.500C134.500 1186 129 1186.800 125.500 1184.600C121.800 1182.300 121 1178.300 123 1176.200C124.500 1174.800 126.300 1175.500 127 1177Z" fill="#030815"/></g></svg>
<svg class="abs" style="left:159px;top:1171px" width="23" height="19" viewBox="0 0 23 19"><rect x="1.500" y="1.500" width="3.600" height="3.600" fill="#19b0f0"/><rect x="5.800" y="1" width="3.800" height="4" fill="#19b0f0"/><rect x="1.500" y="5.800" width="3.600" height="3.600" fill="#19b0f0"/><rect x="5.800" y="5.800" width="3.800" height="3.800" fill="#19b0f0"/><polygon points="1.500,11 11,6.500 21.500,9.500 21.500,13 9.500,17.800 1.500,14.500" fill="#d6d6d6"/><polygon points="1.500,11 9.500,14 9.500,17.800 1.500,14.500" fill="#4a4a4a"/><polygon points="9.500,14 21.500,9.500 21.500,13 9.500,17.800" fill="#a9a9a9"/><rect x="7" y="14.800" width="1.300" height="1.300" fill="#3bd23b"/></svg>
<div class="t" style="top:1171.75px;font-size:12px;line-height:17px;height:17px;left:187px;color:#fff;">本地磁盘 (C:) 属性</div>
<div class="abs" style="left:153px;top:1197px;width:152px;height:2px;background:#76b9ed;"></div>
<svg class="abs" style="left:319px;top:1168px" width="25" height="22" viewBox="0 0 25 22"><rect x="1" y="8" width="3" height="12" fill="#9aa09a" stroke="#777" stroke-width=".6"/><rect x="1.500" y="9" width="2" height="2.500" fill="#4fd24f"/><rect x="5.500" y="2" width="18" height="14" fill="#dfe9ef" stroke="#8d9aa3" stroke-width="1.200"/><path d="M7 10.500l3-4.500l3 5l3-4l2.500 3.500l3-2" stroke="#2a8ac8" stroke-width="1.200" fill="none"/><rect x="11.500" y="16.500" width="6" height="2" fill="#aab3b8"/><rect x="9.500" y="18.300" width="10" height="1.600" fill="#9aa2a7"/></svg>
<div class="t" style="top:1171.75px;font-size:12px;line-height:17px;height:17px;left:348px;color:#fff;">任务管理器</div>
<div class="abs" style="left:314px;top:1197px;width:152px;height:2px;background:#76b9ed;"></div>
<svg class="abs" style="left:1396px;top:1169px" width="70" height="20" viewBox="1396 1169 70 20" fill="none">
<rect x="1399.500" y="1172.500" width="11" height="12" fill="#2a3040" stroke="#e8e8e8" stroke-width="1"/><path d="M1402.500 1173v9M1405 1173v9M1407.500 1173v9M1400 1175.500h10M1400 1178.500h10" stroke="#596070" stroke-width=".7"/><rect x="1400" y="1181.500" width="10" height="2.500" fill="#55b4f5"/>
<path d="M1425.500 1173.500h11v9h-9.500M1431.500 1182.500v3M1428 1185.500h7.500" stroke="#fff" stroke-width="1"/><rect x="1421.500" y="1173.500" width="4" height="4" fill="#030815" stroke="#fff" stroke-width="1"/><path d="M1423.500 1177.500v8h3.500" stroke="#fff" stroke-width="1"/>
<path d="M1445.500 1176.500h2.500l3.500-3.500v11l-3.500-3.500h-2.500Z" stroke="#fff" stroke-width="1"/><path d="M1453.500 1176a3.500 3.500 0 0 1 0 5M1455.800 1174a6.300 6.300 0 0 1 0 9M1458.200 1172.200a9 9 0 0 1 0 12.600" stroke="#fff" stroke-width="1"/>
</svg>
<div class="t" style="top:1170.25px;font-size:14px;line-height:20px;height:20px;left:1469px;color:#fff;">英</div>
<div class="t" style="top:1161.75px;font-size:12px;line-height:17px;height:17px;left:1341px;width:400px;text-align:center;color:#fff;letter-spacing:.2px;">08:20:12</div>
<div class="t" style="top:1180.75px;font-size:12px;line-height:17px;height:17px;left:1341.5px;width:400px;text-align:center;color:#fff;letter-spacing:.45px;">2020/09/05 周六</div>
<div class="abs" style="left:1595px;top:1159px;width:1px;height:40px;background:#6b6f78;"></div>

</body>
</html>
